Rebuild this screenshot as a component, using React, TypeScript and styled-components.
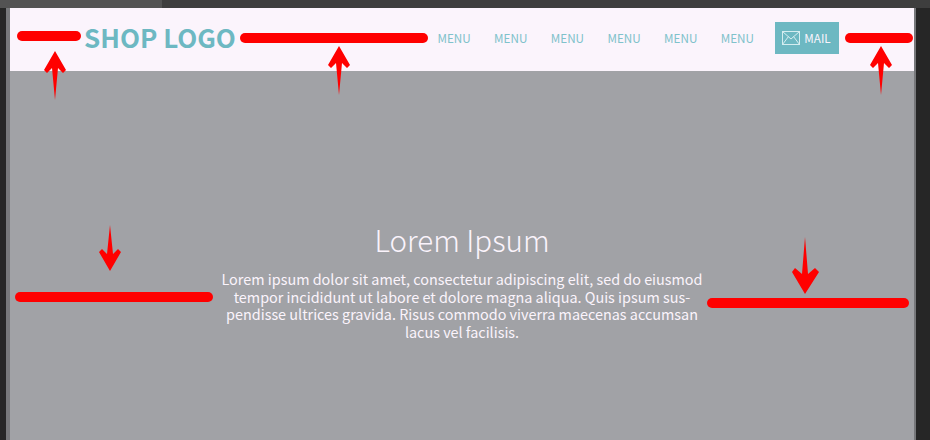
import React from "react";
import styled, { createGlobalStyle } from "styled-components";

const GlobalStyle = createGlobalStyle`
    html, body {
        margin: 0;
        padding: 0;
        background: #262626;
    }
    * {
        box-sizing: border-box;
    }
`;

const menuItems = ["MENU", "MENU", "MENU", "MENU", "MENU", "MENU"];

// red markup someone drew over the mockup
const bars = [
    { x: 17, y: 31, w: 64 },
    { x: 240, y: 33, w: 188 },
    { x: 845, y: 33, w: 68 },
    { x: 15, y: 292, w: 198 },
    { x: 707, y: 298, w: 202 },
];

const upArrows = [
    { x: 55, y: 51 },
    { x: 339, y: 46 },
    { x: 881, y: 46 },
];

const MailIcon = () => (
    <svg width="18" height="14" viewBox="0 0 18 14" fill="none" stroke="#d5edf0" strokeWidth="1">
        <rect x="0.5" y="0.5" width="17" height="13" />
        <path d="M0.5 0.5 L9 8 L17.5 0.5 M0.5 13.5 L6.5 5.5 M17.5 13.5 L11.5 5.5" />
    </svg>
);

const Markup = () => (
    <Overlay width="930" height="440" viewBox="0 0 930 440">
        {bars.map(({ x, y, w }) => (
            <rect key={x} x={x} y={y} width={w} height={10} rx={5} fill="#ff0000" />
        ))}
        {upArrows.map(({ x, y }) => (
            <path
                key={x}
                d={`M${x} ${y} L${x + 11} ${y + 19} L${x + 8} ${y + 22} L${x + 3} ${y + 17} L${x} ${y + 49} L${x - 3} ${y + 17} L${x - 8} ${y + 22} L${x - 11} ${y + 19} Z`}
                fill="#ff0000"
            />
        ))}
        <path d="M110 271 L99 252 L102 249 L107 254 L110 225 L113 254 L118 249 L121 252 Z" fill="#ff0000" />
        <path d="M805 294 L792 272 L795 268 L802 274 L805 237 L808 274 L815 268 L819 272 Z" fill="#ff0000" />
    </Overlay>
);

export default function App() {
    return (
        <>
            <GlobalStyle />
            <Window>
                <TabStrip>
                    <ActiveTab />
                </TabStrip>
                <Canvas>
                    <Page>
                        <Header>
                            <Logo>SHOP LOGO</Logo>
                            <Nav>
                                {menuItems.map((label, i) => (
                                    <NavLink key={i}>{label}</NavLink>
                                ))}
                                <MailButton>
                                    <MailIcon />
                                    <MailLabel>MAIL</MailLabel>
                                </MailButton>
                            </Nav>
                        </Header>
                        <Hero>
                            <Title>Lorem Ipsum</Title>
                            <Lead>
                                Lorem ipsum dolor sit amet, consectetur adipiscing elit, sed do eiusmod
                                <br />
                                tempor incididunt ut labore et dolore magna aliqua. Quis ipsum sus-
                                <br />
                                pendisse ultrices gravida. Risus commodo viverra maecenas accumsan
                                <br />
                                lacus vel facilisis.
                            </Lead>
                        </Hero>
                    </Page>
                </Canvas>
                <Markup />
            </Window>
        </>
    );
}

const Window = styled.div`
    position: relative;
    width: 930px;
    height: 440px;
    overflow: hidden;
    display: flex;
    flex-direction: column;
    background: #262626;
    font-family: "Noto Sans CJK JP", "Noto Sans", sans-serif;
`;

const TabStrip = styled.div`
    height: 8px;
    flex: none;
    background: #3e3e3e;
`;

const ActiveTab = styled.div`
    width: 162px;
    height: 100%;
    background: #535353;
`;

const Canvas = styled.div`
    flex: 1;
    padding-left: 6px;
    display: flex;
`;

const Page = styled.div`
    width: 910px;
    display: flex;
    flex-direction: column;
    border-left: 4px solid #77787b;
    border-right: 2px solid #77787b;
`;

const Header = styled.header`
    height: 63px;
    flex: none;
    display: flex;
    align-items: center;
    justify-content: space-between;
    padding: 0 75px 3px 74px;
    background: #fbf4fc;
`;

const Logo = styled.div`
    color: #6db8c2;
    font-size: 26px;
    font-weight: 700;
    padding-bottom: 4px;
`;

const Nav = styled.nav`
    display: flex;
    align-items: center;
    gap: 23.4px;
`;

const NavLink = styled.a`
    color: #7fc2cb;
    font-size: 11.7px;
    padding-bottom: 2px;
`;

const MailButton = styled.a`
    width: 64px;
    height: 32px;
    margin-left: -2.4px;
    display: flex;
    align-items: center;
    justify-content: center;
    gap: 4px;
    background: #6db8c2;
    color: #fbf4fc;
    font-size: 11.7px;
`;

const MailLabel = styled.span`
    padding-bottom: 2px;
    margin-right: 1px;
`;

const Hero = styled.section`
    flex: 1;
    display: flex;
    flex-direction: column;
    align-items: center;
    padding-top: 148px;
    background: #a1a2a6;
    color: #fbf4fc;
    text-align: center;
`;

const Title = styled.h1`
    margin: 0 0 11px;
    font-size: 29.5px;
    font-weight: 300;
    line-height: 40px;
`;

const Lead = styled.p`
    margin: 0;
    font-size: 14.4px;
    font-weight: 400;
    line-height: 17.5px;
`;

const Overlay = styled.svg`
    position: absolute;
    top: 0;
    left: 0;
    pointer-events: none;
`;
